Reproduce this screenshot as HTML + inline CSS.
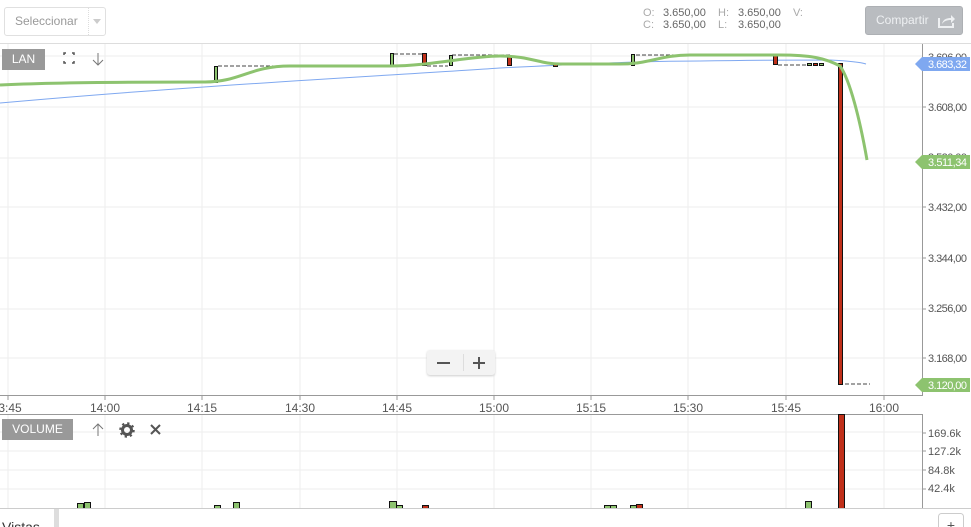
<!DOCTYPE html>
<html><head><meta charset="utf-8"><style>
body{margin:0;width:971px;height:527px;overflow:hidden;background:#fff;font-family:"Liberation Sans",sans-serif;position:relative}
.sel{position:absolute;left:4px;top:7px;width:100px;height:27px;border:1px solid #e0e0e0;border-radius:3px;color:#999;font-size:12px;line-height:27px}
.btn{position:absolute;left:865px;top:6px;width:96px;height:27px;background:#b9bcc0;border:1px solid #adb0b4;border-radius:3px;color:#eef0f2;font-size:12px;line-height:27px}
.ohlc{position:absolute;top:7px;font-size:11px;color:#aaa;line-height:12px}
.ohlc b{font-weight:normal;color:#666}
.tag{position:absolute;background:#999;color:#fff;font-size:12px;text-align:center}
</style></head><body>
<div class="sel"><span style="position:absolute;left:10px">Seleccionar</span><span style="position:absolute;left:83px;top:0;height:27px;border-left:1px dotted #ddd"></span><span style="position:absolute;left:88px;top:11px;width:0;height:0;border:4px solid transparent;border-top:5px solid #ccc;border-bottom:0"></span></div>
<div class="ohlc" style="left:643px">O:<br>C:</div>
<div class="ohlc" style="left:663px"><b>3.650,00<br>3.650,00</b></div>
<div class="ohlc" style="left:718px">H:<br>L:</div>
<div class="ohlc" style="left:738px"><b>3.650,00<br>3.650,00</b></div>
<div class="ohlc" style="left:793px">V:</div>
<div class="btn"><span style="position:absolute;left:10px">Compartir</span>
<svg style="position:absolute;left:72px;top:6px" width="18" height="15" viewBox="0 0 18 15"><path d="M1 5v9h14v-4" fill="none" stroke="#eef0f2" stroke-width="2"/><path d="M4 11c1-5 5-6 9-6V2l4 4-4 4V7c-4 0-7 1-9 4z" fill="#eef0f2"/></svg></div>
<svg style="position:absolute;left:0;top:0" width="971" height="527">
<line x1="0" y1="43.5" x2="971" y2="43.5" stroke="#ddd"/>
<g stroke="#eee">
<path d="M8 44V395M105 44V395M202 44V395M300 44V395M397 44V395M494 44V395M591 44V395M688 44V395M786 44V395M884 44V395"/>
<path d="M0 56H922M0 107H922M0 158H922M0 207H922M0 258H922M0 309H922M0 358H922"/>
<path d="M8 415V508M105 415V508M202 415V508M300 415V508M397 415V508M494 415V508M591 415V508M688 415V508M786 415V508M884 415V508"/>
<path d="M0 432H922M0 451H922M0 470H922M0 489H922"/>
</g>
<path d="M922.5 44V395.5H0M0 414.5H922.5V508" fill="none" stroke="#999"/>
<g stroke="#999"><path d="M8 395v5M105 395v5M202 395v5M300 395v5M397 395v5M494 395v5M591 395v5M688 395v5M786 395v5M884 395v5M922 107h4M922 207h4M922 258h4M922 309h4M922 358h4M922 433h4M922 451h4M922 470h4M922 489h4"/></g>
<g font-size="11" fill="#555" textLength="40"><text x="928" y="111" textLength="39">3.608,00</text><text x="928" y="211" textLength="39">3.432,00</text><text x="928" y="262" textLength="39">3.344,00</text><text x="928" y="312" textLength="39">3.256,00</text><text x="928" y="362" textLength="39">3.168,00</text><text x="928" y="61" textLength="39">3.696,00</text><text x="928" y="161" textLength="39">3.520,00</text>
<text x="928" y="437">169.6k</text><text x="928" y="455">127.2k</text><text x="928" y="474">84.8k</text><text x="928" y="492">42.4k</text></g>
<g font-size="12" fill="#555" text-anchor="middle"><text x="10" y="412">3:45</text><text x="105" y="412">14:00</text><text x="202" y="412">14:15</text><text x="300" y="412">14:30</text><text x="397" y="412">14:45</text><text x="494" y="412">15:00</text><text x="591" y="412">15:15</text><text x="688" y="412">15:30</text><text x="786" y="412">15:45</text><text x="884" y="412">16:00</text></g>
<g stroke="#444" stroke-dasharray="4,2" fill="none"><path d="M218 66H290M394 54H424M427 66H448M452 55H510M636 55H690M778 65H806M845 384H870"/></g>
<path d="M0 103C200 85 400 75 500 68C600 63 650 61 700 61C760 60 800 60 830 60C850 61 860 62 866 64" fill="none" stroke="#7fa8f0" stroke-width="1"/>
<g stroke="#111" stroke-width="1">
<rect x="214.5" y="66.5" width="3" height="16" fill="#8dc36f"/>
<rect x="390.5" y="53.5" width="3" height="13" fill="#8dc36f"/>
<rect x="422.5" y="53.5" width="4" height="12" fill="#c0301a"/>
<rect x="449.5" y="55.5" width="3" height="10" fill="#8dc36f"/>
<rect x="507.5" y="56.5" width="4" height="9" fill="#c0301a"/>
<rect x="553.5" y="64.5" width="4" height="2" fill="#c0301a"/>
<rect x="631.5" y="54.5" width="3" height="11" fill="#8dc36f"/>
<rect x="773.5" y="55.5" width="4" height="9" fill="#c0301a"/>
<rect x="807.5" y="63.5" width="4" height="2" fill="#8dc36f"/>
<rect x="813.5" y="63.5" width="4" height="2" fill="#c0301a"/>
<rect x="819.5" y="63.5" width="4" height="2" fill="#8dc36f"/>
<rect x="838.5" y="63.5" width="4" height="321" fill="#c0301a"/>
</g>
<path d="M0 85C60 82 150 82 205 82C240 82 250 66 290 66H390C430 66 470 56 500 56C530 56 540 64 560 64H620C650 64 660 55 690 55H780C810 55 825 58 840 66C850 80 860 120 867 160" fill="none" stroke="#8dc36f" stroke-width="3"/>
<path d="M915 64l7-7h48v14h-48z" fill="#7fa8f0"/><text x="928" y="68" font-size="11" fill="#fff" textLength="39">3.683,32</text>
<path d="M915 162l7-7h48v14h-48z" fill="#8dc36f"/><text x="928" y="166" font-size="11" fill="#fff" textLength="39">3.511,34</text>
<path d="M915 385l7-7h48v14h-48z" fill="#8dc36f"/><text x="928" y="389" font-size="11" fill="#fff" textLength="39">3.120,00</text>
<rect x="0" y="508" width="971" height="19" fill="#fff"/>
<g stroke="#111" fill="#8dc36f">
<rect x="77.5" y="503.5" width="6" height="6"/><rect x="84.5" y="502.5" width="6" height="7"/>
<rect x="214.5" y="505.5" width="6" height="4"/><rect x="233.5" y="502.5" width="6" height="7"/>
<rect x="389.5" y="501.5" width="7" height="8"/><rect x="396.5" y="505.5" width="6" height="4"/>
<rect x="422.5" y="505.5" width="6" height="4" fill="#c0301a"/>
<rect x="604.5" y="505.5" width="6" height="4"/><rect x="610.5" y="505.5" width="6" height="4"/>
<rect x="630.5" y="505.5" width="6" height="4"/><rect x="636.5" y="504.5" width="6" height="5" fill="#c0301a"/>
<rect x="805.5" y="501.5" width="6" height="8"/>
<rect x="838.5" y="414.5" width="6" height="95" fill="#c0301a"/>
</g>
<rect x="0" y="509" width="971" height="18" fill="#fff"/>
<line x1="0" y1="508.5" x2="971" y2="508.5" stroke="#ccc"/>
<rect x="54" y="509" width="5" height="18" fill="#ddd"/>
<text x="2" y="532" font-size="14" fill="#333">Vistas</text>
<rect x="938.5" y="513.5" width="25" height="20" rx="3" fill="#fff" stroke="#ccc"/><text x="951" y="530" font-size="14" fill="#555" text-anchor="middle">+</text>
<path d="M64 55v-2h2M72 53h2v2M74 61v2h-2M66 63h-2v-2" fill="none" stroke="#555" stroke-width="1.5"/>
<path d="M98 53v12M93 60l5 5 5-5" fill="none" stroke="#777"/>
<path d="M98 436V424M93 429l5-5 5 5" fill="none" stroke="#777"/>
<circle cx="127" cy="430" r="4.5" fill="none" stroke="#555" stroke-width="3"/><circle cx="127" cy="430" r="6.5" fill="none" stroke="#555" stroke-width="2.5" stroke-dasharray="2.2,2.9"/>
<path d="M151 425l9 9M160 425l-9 9" stroke="#555" stroke-width="2"/>
</svg>
<div class="tag" style="left:2px;top:49px;width:43px;height:21px;line-height:21px">LAN</div>
<div class="tag" style="left:2px;top:419px;width:71px;height:21px;line-height:21px">VOLUME</div>
<div style="position:absolute;left:427px;top:350px;width:68px;height:25px;background:#f3f3f3;border-radius:3px;box-shadow:0 1px 2px #ccc"><span style="position:absolute;left:10px;top:12px;width:13px;height:2px;background:#555"></span><span style="position:absolute;left:36px;top:4px;height:17px;border-left:1px solid #ddd"></span><span style="position:absolute;left:46px;top:12px;width:12px;height:2px;background:#555"></span><span style="position:absolute;left:51px;top:7px;width:2px;height:12px;background:#555"></span></div>
</body></html>
